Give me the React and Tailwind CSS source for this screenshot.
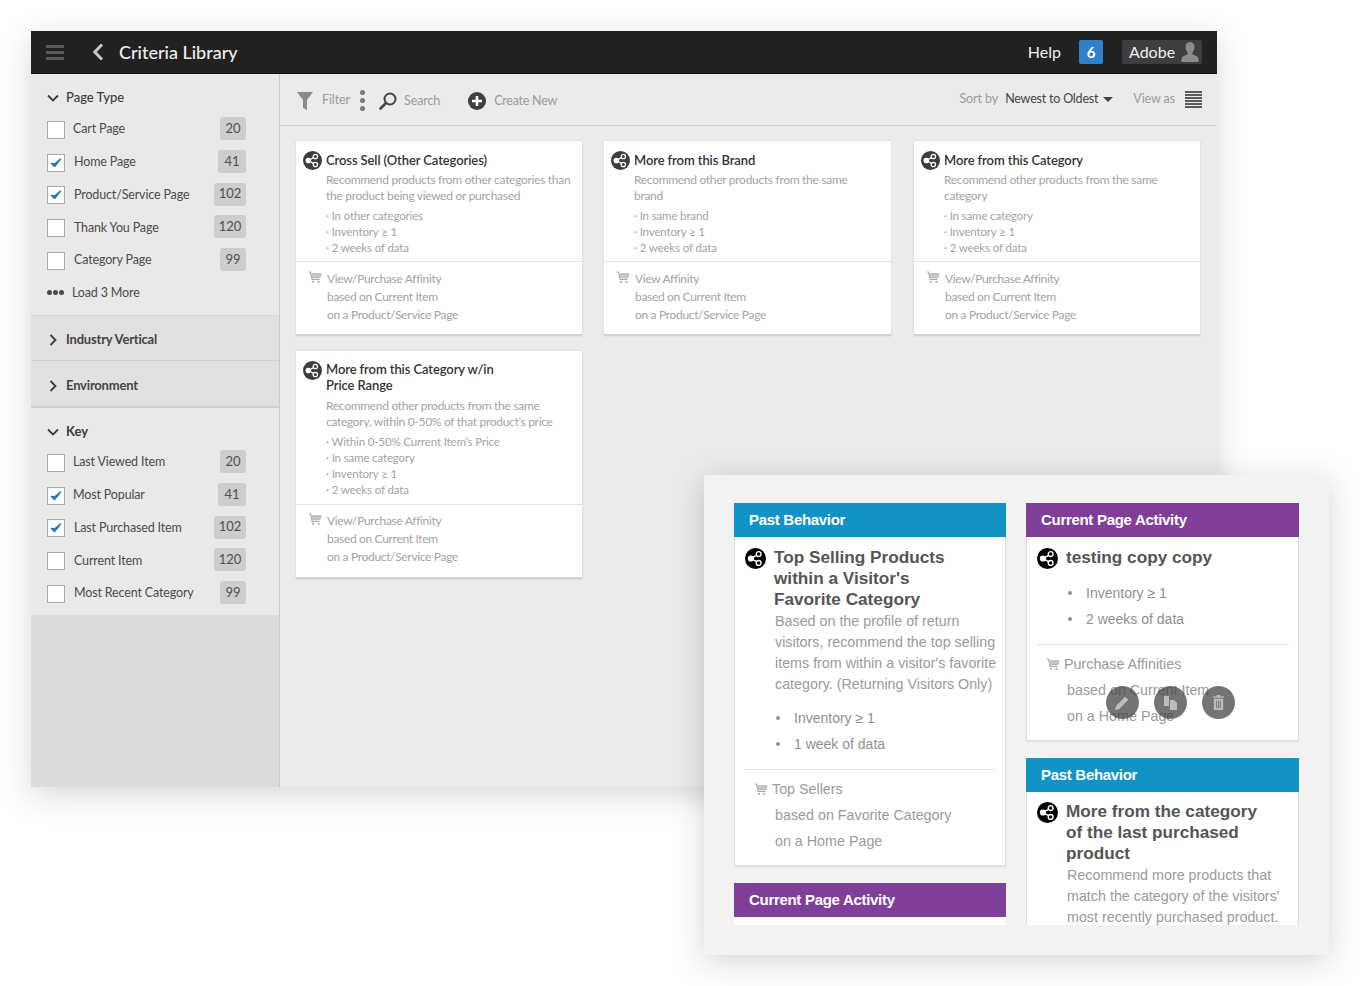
import React from 'react'

const ShareIcon = ({ className, fill = '#3d3d3d' }) => (
  <svg viewBox="0 0 20 20" className={className}>
    <circle cx="10" cy="10" r="10" fill={fill} />
    <g fill="none" stroke="#fff" strokeWidth="1.3">
      <circle cx="5.6" cy="10" r="2.3" fill="#fff" />
      <circle cx="13" cy="5.8" r="2.3" />
      <circle cx="13" cy="14.2" r="2.3" />
      <path d="M7.5 9l3.6-2M7.5 11l3.6 2" />
    </g>
  </svg>
)

const CartIcon = ({ className }) => (
  <svg viewBox="0 0 14 13" className={className}>
    <path d="M0.5 1h2l1.6 7.4h7.4" fill="none" stroke="#a8a8a8" strokeWidth="1.1" />
    <path d="M3.2 2.2h10.3l-1.2 4.8H4.2z" fill="#b4b4b4" />
    <path d="M5 3.4v3M7 3.4v3M9 3.4v3M11 3.4v3" stroke="#fff" strokeWidth="0.5" />
    <circle cx="5" cy="10.8" r="1.1" fill="#a8a8a8" />
    <circle cx="10.5" cy="10.8" r="1.1" fill="#a8a8a8" />
  </svg>
)

const Chevron = ({ open }) => (
  <svg viewBox="0 0 12 12" className="w-3 h-3 shrink-0">
    <path d={open ? 'M1 3.5l5 5 5-5' : 'M3.5 1l5 5-5 5'} fill="none" stroke="#3b3b3b" strokeWidth="1.8" />
  </svg>
)

const Check = () => (
  <svg viewBox="0 0 12 12" className="w-3 h-3">
    <path d="M1.5 6.5l3 3 6-7.5-6 5z" fill="#2f6fc0" stroke="#2f6fc0" strokeWidth="1.5" strokeLinejoin="round" />
  </svg>
)

const pageTypes = [
  { label: 'Cart Page', count: '20', w: 'w-[26px]', ml: 'ml-[8px]' },
  { label: 'Home Page', count: '41', checked: true, w: 'w-[28px]', ml: 'ml-[9px]' },
  { label: 'Product/Service Page', count: '102', checked: true, w: 'w-[32px]', ml: 'ml-[9px]' },
  { label: 'Thank You Page', count: '120', w: 'w-[32px]', ml: 'ml-[9px]' },
  { label: 'Category Page', count: '99', w: 'w-[26px]', ml: 'ml-[9px]' },
]

const keys = [
  { label: 'Last Viewed Item', count: '20', w: 'w-[26px]', ml: 'ml-[8px]' },
  { label: 'Most Popular', count: '41', checked: true, w: 'w-[28px]', ml: 'ml-[8px]' },
  { label: 'Last Purchased Item', count: '102', checked: true, w: 'w-[32px]', ml: 'ml-[9px]' },
  { label: 'Current Item', count: '120', w: 'w-[32px]', ml: 'ml-[9px]' },
  { label: 'Most Recent Category', count: '99', w: 'w-[26px]', ml: 'ml-[9px]' },
]

const FilterRow = ({ item }) => (
  <div className="flex items-center h-[32.7px] text-[12.5px] tracking-[-0.15px] text-[#4b4b4b]">
    <span className="mt-px w-[18px] h-[18px] border border-[#a9a9a9] bg-white flex items-center justify-center shrink-0">
      {item.checked && <Check />}
    </span>
    <span className={`${item.ml} mt-px`}>{item.label}</span>
    <span className={`${item.w} ml-auto -mt-px h-[23px] rounded-[3px] bg-[#cdcdcd] flex items-center justify-center text-[13px] tracking-normal text-[#505050]`}>
      {item.count}
    </span>
  </div>
)

const cards = [
  {
    title: ['Cross Sell (Other Categories)'],
    desc: ['Recommend products from other categories than', 'the product being viewed or purchased'],
    bullets: ['In other categories', 'Inventory ≥ 1', '2 weeks of data'],
    foot: 'View/Purchase Affinity',
  },
  {
    title: ['More from this Brand'],
    desc: ['Recommend other products from the same', 'brand'],
    bullets: ['In same brand', 'Inventory ≥ 1', '2 weeks of data'],
    foot: 'View Affinity',
  },
  {
    title: ['More from this Category'],
    desc: ['Recommend other products from the same', 'category'],
    bullets: ['In same category', 'Inventory ≥ 1', '2 weeks of data'],
    foot: 'View/Purchase Affinity',
  },
  {
    title: ['More from this Category w/in', 'Price Range'],
    desc: ['Recommend other products from the same', 'category, within 0-50% of that product’s price'],
    bullets: ['Within 0-50% Current Item’s Price', 'In same category', 'Inventory ≥ 1', '2 weeks of data'],
    foot: 'View/Purchase Affinity',
  },
]

const Card = ({ card }) => {
  const tall = card.title.length > 1
  return (
    <div className="bg-white border-b-2 border-[#d2d2d2] shadow-[0_0_2px_rgba(0,0,0,0.12)] nth-3:ml-px">
      <div className={`pl-[7px] pr-2 flex ${tall ? 'pt-[10px] pb-[6px]' : 'pt-[11px] pb-[5px]'}`}>
        <ShareIcon className={`w-[19px] h-[19px] shrink-0 ${tall ? '' : '-mt-px'}`} />
        <div className="ml-[4px] flex-1">
          <div className="text-[13px] leading-[16px] font-semibold text-[#333] tracking-[-0.1px]">
            {card.title.map(t => <div key={t}>{t}</div>)}
          </div>
          <div className={`text-[12px] leading-[16px] tracking-[-0.3px] text-[#a3a3a3] ${tall ? 'mt-[5px]' : 'mt-[4px]'}`}>
            {card.desc.map(t => <div key={t} className="whitespace-nowrap">{t}</div>)}
          </div>
          <div className="mt-[4px] text-[11.5px] leading-[16px] tracking-[-0.15px] text-[#a3a3a3]">
            {card.bullets.map(t => <div key={t}>· {t}</div>)}
          </div>
        </div>
      </div>
      <div className={`border-t border-[#e2e2e2] pl-[12px] flex ${tall ? 'pt-[7px] pb-[11px]' : 'pt-[8px] pb-[10px]'}`}>
        <CartIcon className="w-[14px] h-[13px] mt-[1px] shrink-0" />
        <div className="ml-[5px] text-[12px] leading-[18px] tracking-[-0.33px] text-[#a3a3a3]">
          <div>{card.foot}</div>
          <div>based on Current Item</div>
          <div>on a Product/Service Page</div>
        </div>
      </div>
    </div>
  )
}

const PanelHead = ({ purple, children }) => (
  <div className={`h-[34px] pl-[15px] flex items-center text-[15px] font-bold text-white tracking-[-0.3px] ${purple ? 'bg-[#7f3f98]' : 'bg-[#1293c6]'}`}>
    {children}
  </div>
)

const PanelBullets = ({ items }) => (
  <ul className="text-[14px] leading-[26px] text-[#8f8f8f]">
    {items.map(t => (
      <li key={t} className="flex items-center">
        <span className="w-[4px] h-[4px] rounded-full bg-[#8f8f8f] mr-[14px]" />
        {t}
      </li>
    ))}
  </ul>
)

const RoundBtn = ({ children }) => (
  <span className="w-[33px] h-[33px] rounded-full bg-[#454545]/75 flex items-center justify-center">{children}</span>
)

export default function App() {
  return (
    <div className="relative w-[1364px] h-[986px] bg-white overflow-hidden font-['Lato',sans-serif]">
      <div className="ml-[31px] pt-[31px] w-[1186px]">
        <div className="h-[756px] flex flex-col shadow-[0_8px_30px_rgba(0,0,0,0.16)]">
          <header className="h-[43px] bg-[#212121] border-b border-[#111] flex items-center text-white shrink-0">
            <div className="ml-[15px] w-[18px] flex flex-col gap-[3px]">
              <span className="h-[3px] bg-[#5a5a5a]" />
              <span className="h-[3px] bg-[#5a5a5a]" />
              <span className="h-[3px] bg-[#5a5a5a]" />
            </div>
            <svg viewBox="0 0 12 18" className="w-[12px] h-[18px] ml-[28px]">
              <path d="M10 1.5L2.8 9l7.2 7.5" fill="none" stroke="#c8c8c8" strokeWidth="3" />
            </svg>
            <span className="ml-[15px] text-[18px] font-medium text-[#f0f0f0]">Criteria Library</span>
            <span className="ml-auto text-[16px] text-[#f0f0f0]">Help</span>
            <span className="ml-[18px] w-[24px] h-[24px] rounded-[2px] bg-[#3081cb] flex items-center justify-center text-[15px] font-bold">6</span>
            <div className="ml-[19px] mr-[15px] w-[80px] h-[24px] rounded-[2px] bg-[#3e3e3e] flex items-center justify-between pl-[7px] pr-[2px]">
              <span className="text-[16px] text-[#f0f0f0]">Adobe</span>
              <svg viewBox="0 0 20 22" className="w-[20px] h-[22px]">
                <path d="M10 1c3 0 4.500 2.200 4.500 5 0 2.400-1 4.400-2 5.500v2c2 1 6 1.500 6 4.500v3H1.500v-3c0-3 4-3.500 6-4.500v-2c-1-1.100-2-3.100-2-5.500 0-2.800 1.500-5 4.500-5z" fill="#8b8b8b" />
              </svg>
            </div>
          </header>
          <div className="flex flex-1 min-h-0">
            <aside className="w-[249px] bg-[#dcdcdc] border-r border-[#c9c9c9] flex flex-col shrink-0">
              <div className="h-[242px] bg-[#e9e9e9] pl-[16px] pr-[33px] pt-[16px] border-b border-[#d8d8d8]">
                <div className="flex items-center h-[16px] text-[13px] font-medium text-[#3c3c3c]">
                  <Chevron open />
                  <span className="ml-[7px]">Page Type</span>
                </div>
                <div className="mt-[7px]">
                  {pageTypes.map(item => <FilterRow key={item.label} item={item} />)}
                </div>
                <div className="flex items-center h-[33px] text-[12.5px] tracking-[-0.15px] text-[#4b4b4b]">
                  <span className="flex gap-[1px]">
                    <i className="w-[5px] h-[5px] rounded-full bg-[#4a4a4a]" />
                    <i className="w-[5px] h-[5px] rounded-full bg-[#4a4a4a]" />
                    <i className="w-[5px] h-[5px] rounded-full bg-[#4a4a4a]" />
                  </span>
                  <span className="ml-[8px]">Load 3 More</span>
                </div>
              </div>
              <div className="h-[45px] bg-[#e1e1e1] pl-[16px] pt-[3px] flex items-center border-b border-[#d0d0d0] text-[13px] font-bold tracking-[-0.2px] text-[#444]">
                <Chevron />
                <span className="ml-[7px]">Industry Vertical</span>
              </div>
              <div className="h-[47px] bg-[#e1e1e1] pl-[16px] pt-[4px] flex items-center border-b-2 border-[#d0d0d0] text-[13px] font-bold tracking-[-0.2px] text-[#444]">
                <Chevron />
                <span className="ml-[7px]">Environment</span>
              </div>
              <div className="h-[207px] bg-[#e9e9e9] pl-[16px] pr-[33px] pt-[16px]">
                <div className="flex items-center h-[16px] text-[13px] font-bold text-[#3c3c3c]">
                  <Chevron open />
                  <span className="ml-[7px]">Key</span>
                </div>
                <div className="mt-[6px]">
                  {keys.map(item => <FilterRow key={item.label} item={item} />)}
                </div>
              </div>
            </aside>
            <main className="flex-1 bg-[#ebebeb] flex flex-col min-w-0">
              <div className="h-[52px] border-b border-[#cfcfcf] flex items-center pl-[17px] pr-[15px] text-[12.5px] tracking-[-0.1px] text-[#9a9a9a] shrink-0">
                <svg viewBox="0 0 16 18" className="w-[16px] h-[18px] mt-[2px]">
                  <path d="M0 0h16l-6 8v10l-4-2V8z" fill="#8a8a8a" />
                </svg>
                <span className="ml-[9px] mt-[2px]">Filter</span>
                <span className="ml-[10px] mt-[2px] flex flex-col gap-[3px]">
                  <i className="w-[5px] h-[5px] rounded-full bg-[#7a7a7a]" />
                  <i className="w-[5px] h-[5px] rounded-full bg-[#7a7a7a]" />
                  <i className="w-[5px] h-[5px] rounded-full bg-[#7a7a7a]" />
                </span>
                <svg viewBox="0 0 18 18" className="ml-[14px] mt-[2px] w-[18px] h-[18px]">
                  <circle cx="11" cy="7" r="5.500" fill="none" stroke="#444" strokeWidth="2" />
                  <path d="M7 11l-5.500 5.500" stroke="#444" strokeWidth="2.600" strokeLinecap="round" />
                </svg>
                <span className="ml-[7px] mt-[3px]">Search</span>
                <svg viewBox="0 0 18 18" className="ml-[28px] mt-[3px] w-[18px] h-[18px]">
                  <circle cx="9" cy="9" r="9" fill="#3f3f3f" />
                  <path d="M9 4v10M4 9h10" stroke="#fff" strokeWidth="2.600" />
                </svg>
                <span className="ml-[8px] mt-[3px] tracking-[-0.25px]">Create New</span>
                <span className="ml-auto">Sort by</span>
                <span className="ml-[7px] text-[#444] tracking-[-0.2px]">Newest to Oldest</span>
                <svg viewBox="0 0 10 5" className="ml-[5px] w-[10px] h-[5px]">
                  <path d="M0 0h10L5 5z" fill="#444" />
                </svg>
                <span className="ml-[20px]">View as</span>
                <div className="ml-[10px] w-[17px] h-[17px] flex flex-col justify-between">
                  {[0, 1, 2, 3, 4, 5].map(i => <span key={i} className="h-[2px] bg-[#5a5a5a]" />)}
                </div>
              </div>
              <div className="pl-[16px] pr-[17px] pt-[15px] grid grid-cols-[286px_287px_287px] gap-x-[22px] gap-y-[15px] items-start">
                {cards.map(c => <Card key={c.title[0]} card={c} />)}
              </div>
            </main>
          </div>
        </div>
      </div>

      {/* preview panel floating over the library */}
      <div className="absolute left-[704px] top-[475px] w-[625px] h-[480px] bg-[#f2f2f2] shadow-[0_6px_30px_rgba(0,0,0,0.18)] pt-[28px] px-[30px] pb-[30px] font-['Liberation_Sans',sans-serif]">
        <div className="h-[422px] overflow-hidden flex gap-[20px] items-start">
          <div className="w-[272px] shrink-0">
            <PanelHead>Past Behavior</PanelHead>
            <div className="bg-white border-x border-b border-[#dcdcdc] shadow-[0_1px_2px_rgba(0,0,0,0.08)]">
              <div className="flex pt-[10px] pl-[10px]">
                <ShareIcon className="w-[21px] h-[21px] mt-[1px] shrink-0" fill="#000" />
                <div className="ml-[8px] text-[17.2px] leading-[21px] font-bold text-[#555]">
                  <div>Top Selling Products</div>
                  <div>within a Visitor's</div>
                  <div>Favorite Category</div>
                </div>
              </div>
              <div className="ml-[40px] mt-[1px] text-[14.3px] leading-[21px] text-[#9a9a9a] whitespace-nowrap">
                <div>Based on the profile of return</div>
                <div>visitors, recommend the top selling</div>
                <div>items from within a visitor's favorite</div>
                <div>category. (Returning Visitors Only)</div>
              </div>
              <div className="ml-[41px] mt-[10px]">
                <PanelBullets items={['Inventory ≥ 1', '1 week of data']} />
              </div>
              <div className="mx-[9px] mt-[12px] border-t border-[#e5e5e5]" />
              <div className="pl-[19px] pt-[6px] pb-[11px] text-[14.3px] leading-[26px] text-[#9a9a9a]">
                <div className="flex items-center">
                  <CartIcon className="w-[14px] h-[13px] mr-[4px]" />
                  Top Sellers
                </div>
                <div className="ml-[21px]">based on Favorite Category</div>
                <div className="ml-[21px]">on a Home Page</div>
              </div>
            </div>
            <div className="mt-[17px]">
              <PanelHead purple>Current Page Activity</PanelHead>
              <div className="h-[10px] bg-white" />
            </div>
          </div>
          <div className="w-[273px] shrink-0">
            <div className="relative">
              <PanelHead purple>Current Page Activity</PanelHead>
              <div className="bg-white border-x border-b border-[#dcdcdc] shadow-[0_1px_2px_rgba(0,0,0,0.08)]">
                <div className="flex pt-[10px] pl-[10px]">
                  <ShareIcon className="w-[21px] h-[21px] mt-[1px] shrink-0" fill="#000" />
                  <div className="ml-[8px] text-[17.2px] leading-[21px] font-bold text-[#555]">testing copy copy</div>
                </div>
                <div className="ml-[41px] mt-[11px]">
                  <PanelBullets items={['Inventory ≥ 1', '2 weeks of data']} />
                </div>
                <div className="mx-[9px] mt-[12px] border-t border-[#e5e5e5]" />
                <div className="pl-[19px] pt-[6px] pb-[11px] text-[14.3px] leading-[26px] text-[#9a9a9a]">
                  <div className="flex items-center">
                    <CartIcon className="w-[14px] h-[13px] mr-[4px]" />
                    Purchase Affinities
                  </div>
                  <div className="ml-[21px]">based on Current Item</div>
                  <div className="ml-[21px]">on a Home Page</div>
                </div>
              </div>
              <div className="absolute left-[80px] top-[183px] flex gap-[15px]">
                <RoundBtn>
                  <svg viewBox="0 0 16 16" className="w-[17px] h-[17px]">
                    <path d="M1 15l1-4 8.500-8.500 3 3L5 14z" fill="#bdbdbd" />
                  </svg>
                </RoundBtn>
                <RoundBtn>
                  <svg viewBox="0 0 16 16" className="w-[16px] h-[16px]">
                    <path d="M1 1h5v10H1zM7 5h4l3 3v7H7z" fill="#bdbdbd" />
                  </svg>
                </RoundBtn>
                <RoundBtn>
                  <svg viewBox="0 0 16 16" className="w-[15px] h-[15px]">
                    <path d="M6 0h4v1.500h4V3H2V1.500h4zM3 4h10v12H3zM5.500 6v8h1V6zM7.500 6v8h1V6zM9.500 6v8h1V6z" fill="#bdbdbd" fillRule="evenodd" />
                  </svg>
                </RoundBtn>
              </div>
            </div>
            <div className="mt-[17px]">
              <PanelHead>Past Behavior</PanelHead>
              <div className="bg-white border-x border-[#dcdcdc]">
                <div className="flex pt-[9px] pl-[10px]">
                  <ShareIcon className="w-[21px] h-[21px] mt-[1px] shrink-0" fill="#000" />
                  <div className="ml-[8px] text-[17.2px] leading-[21px] font-bold text-[#555]">
                    <div>More from the category</div>
                    <div>of the last purchased</div>
                    <div>product</div>
                  </div>
                </div>
                <div className="ml-[40px] mt-[1px] text-[14.3px] leading-[21px] text-[#9a9a9a] whitespace-nowrap">
                  <div>Recommend more products that</div>
                  <div>match the category of the visitors'</div>
                  <div>most recently purchased product.</div>
                </div>
              </div>
            </div>
          </div>
        </div>
      </div>
    </div>
  )
}
